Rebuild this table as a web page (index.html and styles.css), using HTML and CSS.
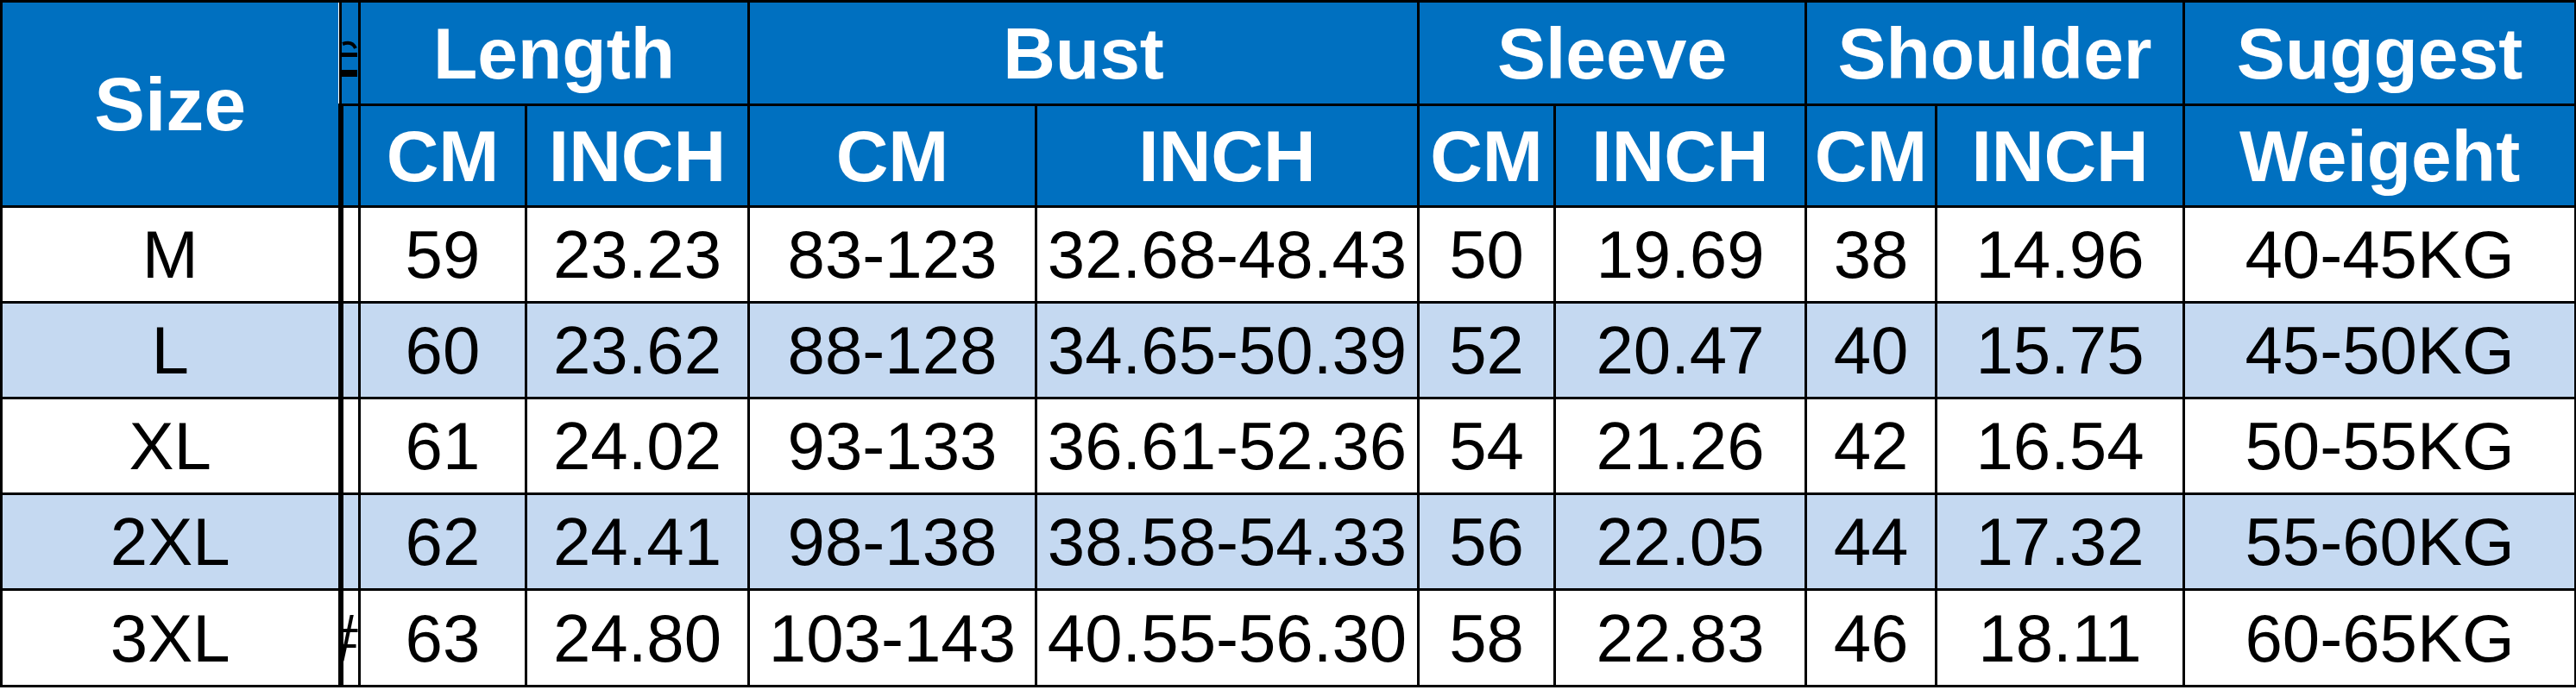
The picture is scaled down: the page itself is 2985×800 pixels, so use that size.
FILE: index.html
```html
<!DOCTYPE html>
<html lang="en">
<head>
<meta charset="utf-8">
<title>Size chart</title>
<link rel="stylesheet" href="styles.css">
</head>
<body>
<table class="chart">
  <colgroup>
    <col class="c-size">
    <col class="c-gap">
    <col class="c-len-cm">
    <col class="c-len-in">
    <col class="c-bust-cm">
    <col class="c-bust-in">
    <col class="c-sl-cm">
    <col class="c-sl-in">
    <col class="c-sh-cm">
    <col class="c-sh-in">
    <col class="c-wt">
  </colgroup>
  <thead>
    <tr class="h1">
      <th rowspan="2" class="size-head">Size</th>
      <th class="gap gap-top"><svg class="glyph" viewBox="0 0 18 46" width="18" height="46"><path d="M1 4 Q12 0 16 9" fill="none" stroke="#000" stroke-width="4"/><rect x="0" y="14" width="18" height="5" fill="#000"/><rect x="0" y="34" width="18" height="8" fill="#000"/></svg></th>
      <th colspan="2">Length</th>
      <th colspan="2">Bust</th>
      <th colspan="2">Sleeve</th>
      <th colspan="2">Shoulder</th>
      <th>Suggest</th>
    </tr>
    <tr class="h2">
      <th class="gap"></th>
      <th>CM</th>
      <th>INCH</th>
      <th>CM</th>
      <th>INCH</th>
      <th>CM</th>
      <th>INCH</th>
      <th>CM</th>
      <th>INCH</th>
      <th>Weigeht</th>
    </tr>
  </thead>
  <tbody>
    <tr>
      <td>M</td><td class="gap"></td><td>59</td><td>23.23</td><td>83-123</td><td>32.68-48.43</td><td>50</td><td>19.69</td><td>38</td><td>14.96</td><td>40-45KG</td>
    </tr>
    <tr class="alt">
      <td>L</td><td class="gap"></td><td>60</td><td>23.62</td><td>88-128</td><td>34.65-50.39</td><td>52</td><td>20.47</td><td>40</td><td>15.75</td><td>45-50KG</td>
    </tr>
    <tr>
      <td>XL</td><td class="gap"></td><td>61</td><td>24.02</td><td>93-133</td><td>36.61-52.36</td><td>54</td><td>21.26</td><td>42</td><td>16.54</td><td>50-55KG</td>
    </tr>
    <tr class="alt">
      <td>2XL</td><td class="gap"></td><td>62</td><td>24.41</td><td>98-138</td><td>38.58-54.33</td><td>56</td><td>22.05</td><td>44</td><td>17.32</td><td>55-60KG</td>
    </tr>
    <tr class="last">
      <td>3XL</td><td class="gap"><div class="clip">#</div></td><td>63</td><td>24.80</td><td>103-143</td><td>40.55-56.30</td><td>58</td><td>22.83</td><td>46</td><td>18.11</td><td>60-65KG</td>
    </tr>
  </tbody>
</table>
</body>
</html>
```
FILE: styles.css
```css
html, body {
  margin: 0;
  padding: 0;
  background: #ffffff;
}

.chart {
  border-collapse: collapse;
  table-layout: fixed;
  width: 2983px;
}

.c-size { width: 393px; }
.c-gap { width: 22px; }
.c-len-cm { width: 193px; }
.c-len-in { width: 258px; }
.c-bust-cm { width: 333px; }
.c-bust-in { width: 443px; }
.c-sl-cm { width: 158px; }
.c-sl-in { width: 291px; }
.c-sh-cm { width: 151px; }
.c-sh-in { width: 287px; }
.c-wt { width: 454px; }

.chart th,
.chart td {
  border: 3px solid #000;
  padding: 0;
  text-align: center;
  vertical-align: middle;
  white-space: nowrap;
  overflow: hidden;
  line-height: 1;
}

.chart thead th {
  background: #0070c0;
  color: #ffffff;
  font-family: "Liberation Sans", Arial, sans-serif;
  font-weight: bold;
  font-size: 84px;
}

.chart thead th.size-head {
  font-size: 88px;
}

.h1 { height: 120px; }
.h2 { height: 118px; }

.chart tbody tr { height: 111px; }
.chart tbody tr.last { height: 112px; }

.chart tbody td {
  background: #ffffff;
  color: #000000;
  font-family: "Liberation Sans", Arial, sans-serif;
  font-size: 78px;
}

.chart tbody tr.alt td {
  background: #c5d9f1;
}

/* narrow hidden spreadsheet column */
.chart .gap {
  border-left-width: 6px;
}

.chart .gap-top {
  border-left-width: 3px;
  vertical-align: top;
}

.chart tbody td:first-child {
  border-right-width: 6px;
}

.glyph {
  display: block;
  margin-top: 44px;
}

.clip {
  display: flex;
  justify-content: flex-end;
  overflow: hidden;
  width: 100%;
}
```
